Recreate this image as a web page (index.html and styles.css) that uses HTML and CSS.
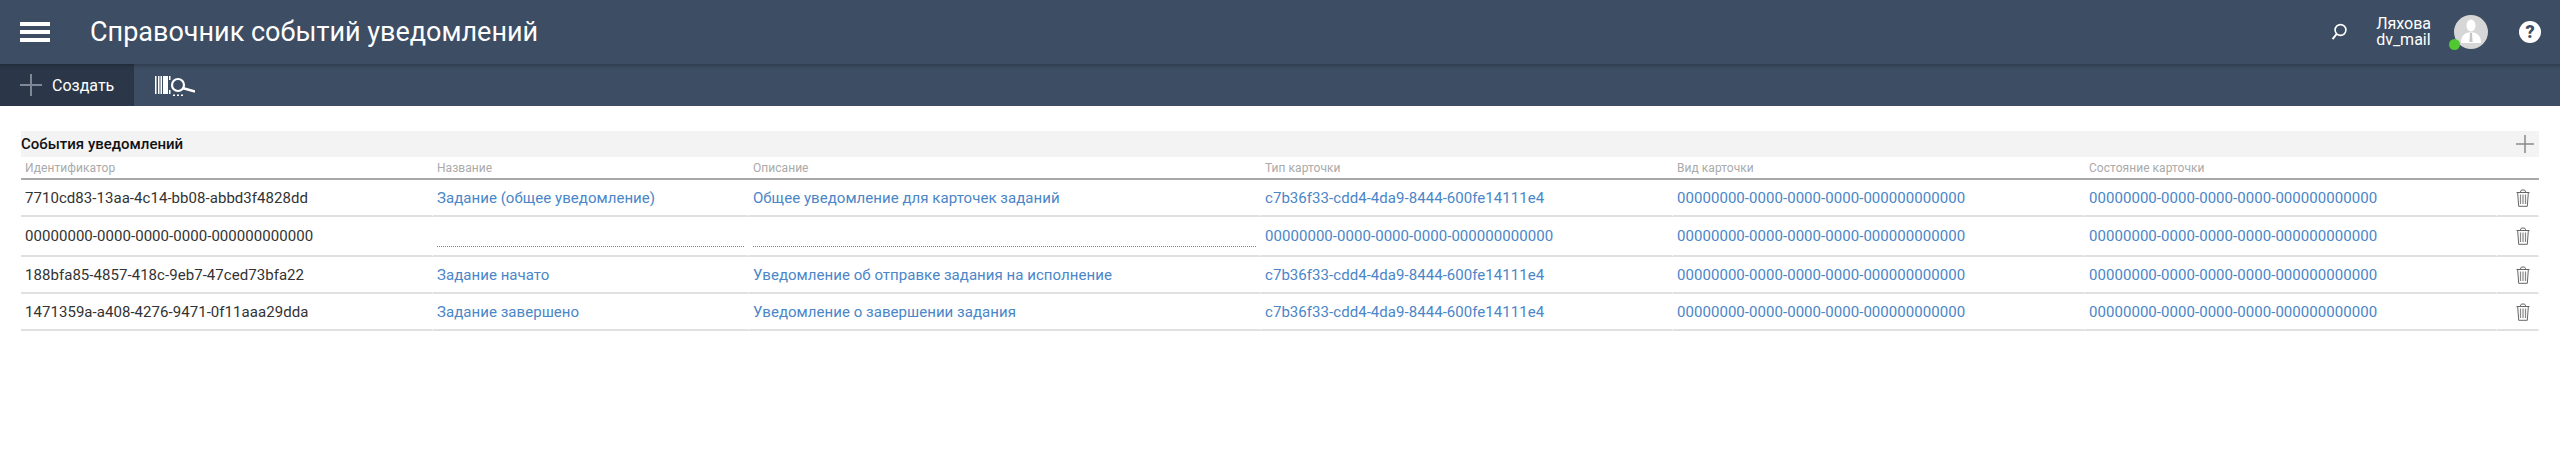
FILE: index.html
```html
<!DOCTYPE html>
<html lang="ru">
<head>
    <meta charset="UTF-8">
    <title>Справочник событий уведомлений</title>
    <link rel="stylesheet" href="styles.css">
</head>
<body>
    <header class="top-bar">
        <button class="menu-button" aria-label="Меню"><span></span><span></span><span></span></button>
        <h1 class="page-title">Справочник событий уведомлений</h1>
        <svg class="search-icon" viewBox="0 0 16 18" width="16" height="18" fill="none" stroke="#fff" stroke-width="1.6">
            <circle cx="9.5" cy="7" r="5.4"/>
            <path d="M5.6 11 L1.6 16.2" stroke-width="2"/>
        </svg>
        <div class="user-name">Ляхова<br>dv_mail</div>
        <div class="avatar">
            <svg viewBox="0 0 34 34" width="34" height="34">
                <circle cx="17" cy="17" r="17" fill="#d6d6d6"/>
                <ellipse cx="17" cy="10.500" rx="4.500" ry="6" fill="#fff"/>
                <path d="M7 28 C7 21 10 19 14 17.500 L20 17.500 C24 19 27 21 27 28 Z" fill="#fff"/>
                <path d="M16 18 L18 18 L18.600 27 L15.400 27 Z" fill="#c4c4c4"/>
            </svg>
            <span class="status-dot"></span>
        </div>
        <div class="help-icon">?</div>
    </header>

    <nav class="tool-bar">
        <button class="create-button">
            <svg viewBox="0 0 22 22" width="22" height="22"><path d="M10 0h2v10h10v2H12v10h-2V12H0v-2h10z" fill="#7f8894"/></svg>
            Создать
        </button>
        <svg class="barcode-icon" viewBox="0 0 40 21" width="40" height="21">
            <path d="M0 1h1.500v18H0zM3 1h1.500v18H3zM5.500 1h1.500v18H5.500zM8 1h5v18H8zM14 1h1.500v4H14zM14 15h1.500v4H14z" fill="#fff"/>
            <circle cx="23" cy="10" r="6" fill="none" stroke="#fff" stroke-width="2.200"/>
            <path d="M27.500 13 L40 16.500" stroke="#fff" stroke-width="2.400"/>
            <path d="M18 19.500h2v1.500h-2zM22 19.500h2v1.500h-2zM26 19.500h2v1.500h-2z" fill="#fff"/>
        </svg>
    </nav>

    <main class="content">
        <div class="section-head">
            <span class="section-title">События уведомлений</span>
            <svg viewBox="0 0 18 18" width="18" height="18"><path d="M8.250 0h1.500v8.250H18v1.500H9.750V18h-1.500V9.750H0v-1.500h8.250z" fill="#8a8a8a"/></svg>
        </div>
        <table class="events-table">
            <colgroup>
                <col class="col-id"><col class="col-name"><col class="col-desc">
                <col class="col-id"><col class="col-id"><col class="col-id"><col class="col-action">
            </colgroup>
            <thead>
                <tr>
                    <th>Идентификатор</th><th>Название</th><th>Описание</th>
                    <th>Тип карточки</th><th>Вид карточки</th><th>Состояние карточки</th><th></th>
                </tr>
            </thead>
            <tbody>
                <tr class="row-short">
                    <td>7710cd83-13aa-4c14-bb08-abbd3f4828dd</td>
                    <td><a>Задание (общее уведомление)</a></td>
                    <td><a>Общее уведомление для карточек заданий</a></td>
                    <td><a>c7b36f33-cdd4-4da9-8444-600fe14111e4</a></td>
                    <td><a>00000000-0000-0000-0000-000000000000</a></td>
                    <td><a>00000000-0000-0000-0000-000000000000</a></td>
                    <td class="action"><svg class="trash-icon" viewBox="0 0 14 18" width="14" height="18"><use href="#trash"/></svg></td>
                </tr>
                <tr class="row-tall">
                    <td>00000000-0000-0000-0000-000000000000</td>
                    <td><div class="empty-input"></div></td>
                    <td><div class="empty-input"></div></td>
                    <td><a>00000000-0000-0000-0000-000000000000</a></td>
                    <td><a>00000000-0000-0000-0000-000000000000</a></td>
                    <td><a>00000000-0000-0000-0000-000000000000</a></td>
                    <td class="action"><svg class="trash-icon" viewBox="0 0 14 18" width="14" height="18"><use href="#trash"/></svg></td>
                </tr>
                <tr class="row-short">
                    <td>188bfa85-4857-418c-9eb7-47ced73bfa22</td>
                    <td><a>Задание начато</a></td>
                    <td><a>Уведомление об отправке задания на исполнение</a></td>
                    <td><a>c7b36f33-cdd4-4da9-8444-600fe14111e4</a></td>
                    <td><a>00000000-0000-0000-0000-000000000000</a></td>
                    <td><a>00000000-0000-0000-0000-000000000000</a></td>
                    <td class="action"><svg class="trash-icon" viewBox="0 0 14 18" width="14" height="18"><use href="#trash"/></svg></td>
                </tr>
                <tr class="row-short">
                    <td>1471359a-a408-4276-9471-0f11aaa29dda</td>
                    <td><a>Задание завершено</a></td>
                    <td><a>Уведомление о завершении задания</a></td>
                    <td><a>c7b36f33-cdd4-4da9-8444-600fe14111e4</a></td>
                    <td><a>00000000-0000-0000-0000-000000000000</a></td>
                    <td><a>00000000-0000-0000-0000-000000000000</a></td>
                    <td class="action"><svg class="trash-icon" viewBox="0 0 14 18" width="14" height="18"><use href="#trash"/></svg></td>
                </tr>
            </tbody>
        </table>
    </main>

    <svg class="icon-defs" width="0" height="0">
        <symbol id="trash" viewBox="0 0 14 18">
            <path d="M0.500 3.500h13M4.500 3C4.500 1.500 5 1 7 1s2.500 .5 2.500 2M1.700 4l1 13.300h8.600l1-13.300" fill="none" stroke="#666" stroke-width="1"/>
            <path d="M4.500 5.500v9.500M7 5.500v9.500M9.500 5.500v9.500" stroke="#888" stroke-width="1.200" fill="none"/>
        </symbol>
    </svg>
</body>
</html>
```

FILE: styles.css
```css
body {
    font-family: Roboto, "Liberation Sans", sans-serif;
    margin: 0;
    padding: 0;
    background-color: #fff;
    color: #222;
}

.top-bar {
    display: flex;
    align-items: center;
    height: 64px;
    padding: 0 19px 0 20px;
    background-color: #3d4d63;
    color: #fff;
}

.menu-button {
    display: flex;
    flex-direction: column;
    gap: 4px;
    width: 30px;
    padding: 0;
    margin: 0 40px 0 0;
    background: none;
    border: none;
}

.menu-button span {
    display: block;
    height: 4px;
    background-color: #fff;
}

.page-title {
    flex: 1;
    margin: 0;
    font-size: 27px;
    font-weight: 400;
}

.search-icon {
    margin-right: 29px;
}

.user-name {
    margin-right: 23px;
    font-size: 16px;
    line-height: 16px;
}

.avatar {
    position: relative;
    width: 34px;
    height: 34px;
    margin-right: 31px;
}

.avatar svg {
    display: block;
}

.status-dot {
    position: absolute;
    left: -5px;
    bottom: -1px;
    width: 11px;
    height: 11px;
    background-color: #4fc92f;
    border-radius: 50%;
}

.help-icon {
    width: 22px;
    height: 22px;
    border-radius: 50%;
    background-color: #fff;
    color: #3d4d63;
    font-size: 18px;
    font-weight: 900;
    line-height: 22px;
    text-align: center;
}

.tool-bar {
    display: flex;
    align-items: center;
    height: 42px;
    background-color: #3d4d63;
    box-shadow: inset 0 5px 5px -4px rgba(0, 0, 0, 0.3);
}

.create-button {
    display: flex;
    align-items: center;
    gap: 10px;
    width: 134px;
    height: 42px;
    padding: 0 0 0 20px;
    background-color: #2b3748;
    box-shadow: inset 0 5px 5px -4px rgba(0, 0, 0, 0.3);
    border: none;
    color: #fff;
    font-family: inherit;
    font-size: 16px;
}

.barcode-icon {
    margin-left: 21px;
}

.content {
    padding: 25px 21px 0;
}

.section-head {
    display: flex;
    align-items: center;
    justify-content: space-between;
    height: 26px;
    padding-right: 5px;
    background-color: #f3f3f3;
}

.section-title {
    font-size: 15px;
    font-weight: 500;
    color: #111;
}

.events-table {
    width: 100%;
    table-layout: fixed;
    border-collapse: separate;
    border-spacing: 0;
    font-size: 15px;
    letter-spacing: 0.05px;
}

.col-id { width: 412px; }
.col-name { width: 316px; }
.col-desc { width: 512px; }
.col-action { width: 42px; }

.events-table th {
    height: 21px;
    padding: 0 0 0 4px;
    border-bottom: 2px solid #a8a8a8;
    color: #aaa;
    font-size: 12px;
    font-weight: 400;
    text-align: left;
}

.events-table td {
    padding: 0 4px;
    border-bottom: 2px solid #e0e0e0;
    border-right: 1px solid #fff;
    color: #333;
    white-space: nowrap;
}

.events-table a {
    color: #4a86c8;
}

.row-short td {
    height: 35px;
}

.row-tall td {
    height: 38px;
}

.empty-input {
    height: 21px;
    border-bottom: 1px dotted #4a90d0;
}

.events-table .action {
    padding: 0 0 0 19px;
}

.trash-icon {
    display: block;
}

.icon-defs {
    position: absolute;
}
```
